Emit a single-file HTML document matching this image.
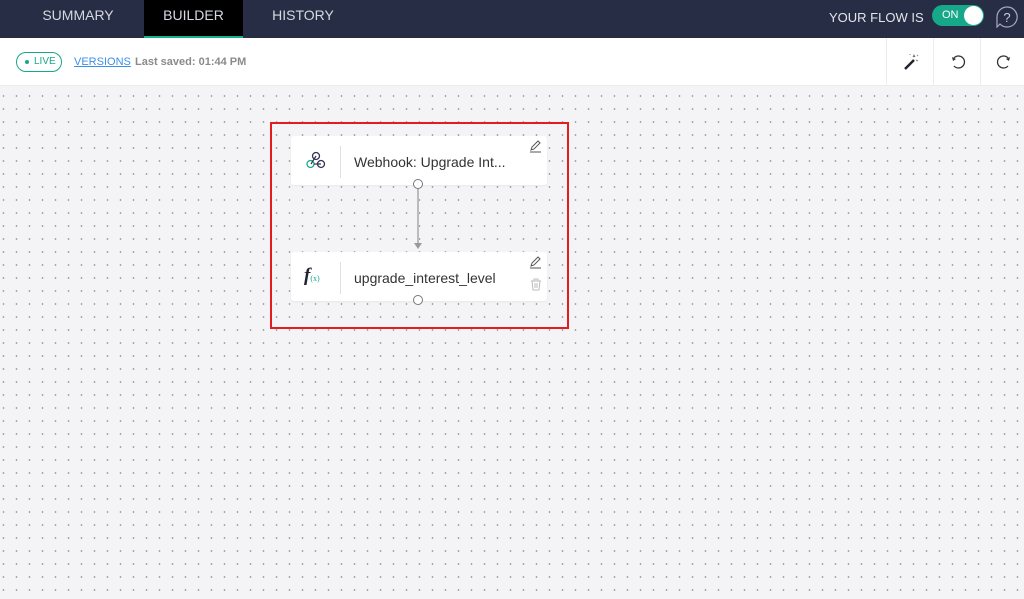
<!DOCTYPE html>
<html><head><meta charset="utf-8"><style>
*{margin:0;padding:0;box-sizing:border-box}
body{width:1024px;height:599px;overflow:hidden;font-family:"Liberation Sans",sans-serif;background:#f4f4f6;position:relative}
.top{position:absolute;left:0;top:0;width:1024px;height:38px;background:#262d45}
.tab{position:absolute;top:0;height:38px;line-height:31px;font-size:14px;color:#d6d9e0;text-align:center}
.bar{position:absolute;left:0;top:38px;width:1024px;height:48px;background:#fff;border-bottom:1px solid #ececec}
.canvas{position:absolute;left:0;top:86px;width:1024px;height:513px;background-color:#f4f4f6;background-image:radial-gradient(circle,#999 0.7px,transparent 1px);background-size:13px 13px;background-position:-3px 3.5px}
.node{position:absolute;background:#fff;border-radius:3px;box-shadow:0 1px 2px rgba(0,0,0,.05)}
.sep{position:absolute;left:49px;top:10px;width:1px;height:32px;background:#e2e2e2}
.lbl{position:absolute;left:63px;top:18px;font-size:14px;color:#333}
.circ{position:absolute;width:10px;height:10px;border:1px solid #777;border-radius:50%;background:#fff}
.ib{position:absolute;top:38px;width:47px;height:47px;border-left:1px solid #ececec}
</style></head><body>
<div class="top">
<div class="tab" style="left:40px;width:76px">SUMMARY</div>
<div class="tab" style="left:144px;width:99px;background:#000;border-bottom:2px solid #17b08f">BUILDER</div>
<div class="tab" style="left:271px;width:64px">HISTORY</div>
<div style="position:absolute;left:829px;top:10px;font-size:13px;color:#e4e6ec">YOUR FLOW IS</div>
<div style="position:absolute;left:932px;top:5px;width:52px;height:21px;border-radius:11px;background:#17a88a"><span style="position:absolute;left:10px;top:4px;font-size:11px;color:#fff">ON</span><div style="position:absolute;right:1px;top:1px;width:19px;height:19px;border-radius:50%;background:#fff"></div></div>
<svg style="position:absolute;left:996px;top:6px" width="22" height="22" viewBox="0 0 22 22"><path d="M11 1a10 10 0 1 1-7 17l-3 3V11A10 10 0 0 1 11 1z" fill="none" stroke="#aab" stroke-width="1.2"/><text x="11" y="16" font-size="13" fill="#ccd" text-anchor="middle" font-family="Liberation Sans">?</text></svg>
</div>
<div class="bar">
<div style="position:absolute;left:16px;top:14px;width:46px;height:20px;border:1px solid #17a88a;border-radius:10px"><span style="position:absolute;left:8px;top:7px;width:4px;height:4px;border-radius:50%;background:#17a88a"></span><span style="position:absolute;left:17px;top:3px;font-size:10px;color:#17a88a">LIVE</span></div>
<div style="position:absolute;left:74px;top:18px;font-size:11px;color:#3b8fe8;text-decoration:underline">VERSIONS</div>
<div style="position:absolute;left:135px;top:18px;font-size:11px;color:#8a8a8a;font-weight:bold">Last saved: 01:44 PM</div>
</div>
<div class="ib" style="left:886px"><svg width="47" height="47"><path d="M18 31l9-9" stroke="#223" stroke-width="2.5"/><path d="M26 19l1-2 1 2M29 22l2 1M23 17v-1M30 18l1-1" stroke="#888" stroke-width="1"/></svg></div>
<div class="ib" style="left:933px"><svg width="47" height="47"><path d="M20 20a6 6 0 1 1 0 8" fill="none" stroke="#333" stroke-width="1.3"/><path d="M18 19l1 4 3-2z" fill="#333"/></svg></div>
<div class="ib" style="left:980px"><svg width="47" height="47"><path d="M27 20a6 6 0 1 0 0 8" fill="none" stroke="#333" stroke-width="1.3"/><path d="M29 19l-1 4-3-2z" fill="#333"/></svg></div>
<div class="canvas"></div>
<div style="position:absolute;left:270px;top:122px;width:299px;height:207px;border:2px solid #e31d1d"></div>
<div class="node" style="left:291px;top:136px;width:256px;height:49px">
<svg style="position:absolute;left:15px;top:15px" width="20" height="19"><circle cx="10" cy="5" r="3.5" fill="none" stroke="#335" stroke-width="1.3"/><circle cx="4.5" cy="13" r="3.5" fill="none" stroke="#17a88a" stroke-width="1.3"/><circle cx="15" cy="13" r="3.5" fill="none" stroke="#335" stroke-width="1.3"/><path d="M8 13h7M10 5l-5 8" stroke="#335" stroke-width="1.2"/></svg>
<div class="sep"></div><div class="lbl">Webhook: Upgrade Int...</div>
<svg style="position:absolute;left:238px;top:4px" width="13" height="13"><path d="M2 10l1-3 6-6 2 2-6 6zM1 12h11" fill="none" stroke="#555" stroke-width="1"/></svg>
</div>
<div style="position:absolute;left:417px;top:189px;width:2px;height:56px;background:#bbb"></div>
<div style="position:absolute;left:414px;top:243px;border-left:4px solid transparent;border-right:4px solid transparent;border-top:6px solid #999"></div>
<div class="circ" style="left:413px;top:179px"></div>
<div class="node" style="left:291px;top:252px;width:256px;height:49px">
<div style="position:absolute;left:13px;top:13px;font-size:19px;font-style:italic;font-weight:bold;color:#223;font-family:'Liberation Serif',serif">f<span style="font-size:8px;color:#17a88a;font-style:normal;font-weight:normal">(x)</span></div>
<div class="sep"></div><div class="lbl">upgrade_interest_level</div>
<svg style="position:absolute;left:238px;top:4px" width="13" height="13"><path d="M2 10l1-3 6-6 2 2-6 6zM1 12h11" fill="none" stroke="#555" stroke-width="1"/></svg>
<svg style="position:absolute;left:239px;top:26px" width="12" height="13"><path d="M1 3h10M4 3V1h4v2M2 3l1 9h6l1-9M5 5v5M7 5v5" fill="none" stroke="#bbb" stroke-width="1"/></svg>
</div>
<div class="circ" style="left:413px;top:295px"></div>
</body></html>
